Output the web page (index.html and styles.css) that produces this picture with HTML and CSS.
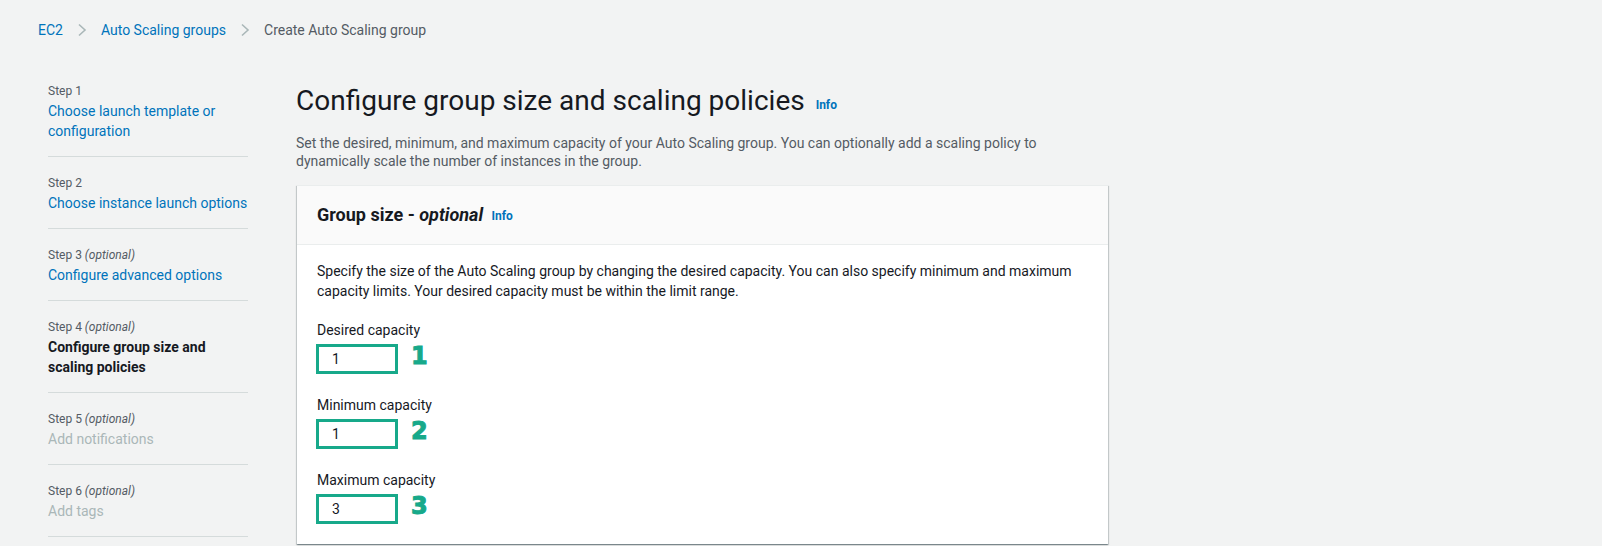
FILE: index.html
```html
<!DOCTYPE html>
<html lang="en">
<head>
<meta charset="utf-8">
<title>Create Auto Scaling group</title>
<link rel="stylesheet" href="styles.css">
</head>
<body>
<nav class="breadcrumbs">
  <a class="crumb-link" href="#">EC2</a>
  <svg class="chev" width="10" height="14" viewBox="0 0 10 14"><path d="M2 1.5 L8 7 L2 12.5" fill="none" stroke="#aab7b8" stroke-width="1.6"/></svg>
  <a class="crumb-link" href="#">Auto Scaling groups</a>
  <svg class="chev" width="10" height="14" viewBox="0 0 10 14"><path d="M2 1.5 L8 7 L2 12.5" fill="none" stroke="#aab7b8" stroke-width="1.6"/></svg>
  <span class="crumb-current">Create Auto Scaling group</span>
</nav>
<div class="layout">
  <ul class="steps">
    <li class="step">
      <div class="step-label">Step 1</div>
      <a class="step-link" href="#">Choose launch template or configuration</a>
    </li>
    <li class="step">
      <div class="step-label">Step 2</div>
      <a class="step-link" href="#">Choose instance launch options</a>
    </li>
    <li class="step">
      <div class="step-label">Step 3 <i>(optional)</i></div>
      <a class="step-link" href="#">Configure advanced options</a>
    </li>
    <li class="step">
      <div class="step-label">Step 4 <i>(optional)</i></div>
      <span class="step-current">Configure group size and scaling policies</span>
    </li>
    <li class="step">
      <div class="step-label">Step 5 <i>(optional)</i></div>
      <span class="step-disabled">Add notifications</span>
    </li>
    <li class="step">
      <div class="step-label">Step 6 <i>(optional)</i></div>
      <span class="step-disabled">Add tags</span>
    </li>
  </ul>
  <main class="main">
    <h1 class="title">Configure group size and scaling policies <a class="info" href="#">Info</a></h1>
    <p class="desc">Set the desired, minimum, and maximum capacity of your Auto Scaling group. You can optionally add a scaling policy to dynamically scale the number of instances in the group.</p>
    <section class="card">
      <header class="card-header">
        <h2 class="card-title">Group size - <i>optional</i> <a class="info" href="#">Info</a></h2>
      </header>
      <div class="card-body">
        <p class="card-text">Specify the size of the Auto Scaling group by changing the desired capacity. You can also specify minimum and maximum capacity limits. Your desired capacity must be within the limit range.</p>
        <div class="fields">
          <div class="field">
            <label class="field-label">Desired capacity</label>
            <div class="field-row">
              <div class="input">1</div>
              <span class="marker">1</span>
            </div>
          </div>
          <div class="field">
            <label class="field-label">Minimum capacity</label>
            <div class="field-row">
              <div class="input">1</div>
              <span class="marker">2</span>
            </div>
          </div>
          <div class="field">
            <label class="field-label">Maximum capacity</label>
            <div class="field-row">
              <div class="input">3</div>
              <span class="marker">3</span>
            </div>
          </div>
        </div>
      </div>
    </section>
  </main>
</div>
</body>
</html>
```

FILE: styles.css
```css
* { box-sizing: border-box; }
html, body { margin: 0; padding: 0; }
body {
  background: #f2f3f3;
  font-family: Roboto, "Open Sans", "Liberation Sans", sans-serif;
  font-size: 14px;
  line-height: 20px;
  color: #16191f;
  height: 546px;
  overflow: hidden;
}
a { text-decoration: none; }

.breadcrumbs {
  display: flex;
  align-items: center;
  padding: 20px 0 0 38px;
  height: 40px;
  gap: 14px;
}
.crumb-link { color: #0073bb; }
.crumb-current { color: #545b64; }
.chev { display: block; }

.layout {
  display: flex;
  gap: 48px;
  padding-left: 48px;
  margin-top: 41px;
}

.steps {
  list-style: none;
  margin: 0;
  padding: 2px 0 0;
  width: 200px;
  flex: none;
}
.step {
  border-bottom: 1px solid #d5dbdb;
  padding: 18px 0 15px;
}
.step:first-child { padding-top: 0; }
.step-label {
  font-size: 12px;
  line-height: 16px;
  color: #545b64;
  margin-bottom: 2px;
}
.step-link { color: #0073bb; display: block; }
.step-current { font-weight: 700; display: block; }
.step-disabled { color: #aab7b8; display: block; }

.main { width: 812px; }

.title {
  margin: 2px 0 0;
  font-size: 28px;
  line-height: 36px;
  font-weight: 400;
  color: #16191f;
}
.info {
  color: #0073bb;
  font-size: 12px;
  font-weight: 700;
  margin-left: 4px;
  vertical-align: 1px;
}
.desc {
  margin: 11px 0 15px;
  line-height: 18px;
  color: #545b64;
}

.card {
  background: #fff;
  margin-left: 1px;
  box-shadow: 0 1px 1px 0 rgba(0,28,36,.3), 1px 1px 1px 0 rgba(0,28,36,.15), -1px 1px 1px 0 rgba(0,28,36,.15);
  border-top: 1px solid #eaeded;
}
.card-header {
  background: #fafafa;
  border-bottom: 1px solid #eaeded;
  padding: 18px 20px 17px;
}
.card-title {
  margin: 0;
  font-size: 18px;
  line-height: 22px;
  font-weight: 700;
}
.card-title i { font-weight: 700; }
.card-body {
  padding: 16px 20px 20px;
}
.card-text { margin: 0 0 19px; }
.fields {
  display: flex;
  flex-direction: column;
  gap: 21px;
}
.field-label {
  display: block;
  margin-bottom: 4px;
}
.field-row {
  display: flex;
  align-items: center;
  gap: 13px;
}
.input {
  width: 82px;
  height: 30px;
  border: 3px solid #17a98a;
  background: #fff;
  padding-left: 13px;
  line-height: 24px;
  margin-left: -1px;
}
.marker {
  font-family: "DejaVu Sans", sans-serif;
  font-weight: 700;
  font-size: 24px;
  line-height: 24px;
  color: #17a98a;
  -webkit-text-stroke: 1px #17a98a;
  margin-top: -6px;
}
```
